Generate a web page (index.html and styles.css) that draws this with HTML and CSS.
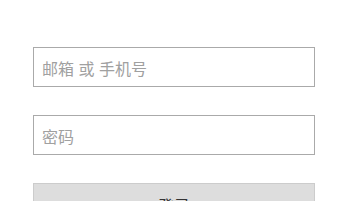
FILE: index.html
```html
<!DOCTYPE html>
<html lang="zh-CN">
<head>
  <meta charset="UTF-8">
  <meta name="viewport" content="width=device-width, initial-scale=1.0">
  <title>登录</title>
  <link rel="stylesheet" href="styles.css">
</head>
<body>
<div class="container">
  <form id="login-form" class="login-form">
    <input type="text" class="field" placeholder="邮箱 或 手机号" />
    <input type="password" class="field" placeholder="密码" />
    <button type="submit" class="button-login">登录</button>
  </form>
</div>
</body>
</html>
```

FILE: styles.css
```css
body {
  margin: 0;
  font-family: "Liberation Sans", Arial, "Noto Sans CJK SC", sans-serif;
  background-color: #fff;
}

.container {
  padding: 47px 0 0 33px;
}

.login-form {
  display: flex;
  flex-direction: column;
  gap: 28px;
  width: 282px;
}

.field {
  width: 100%;
  height: 40px;
  padding: 5px 8px 0;
  border: 1px solid #aaa;
  border-radius: 0;
  box-sizing: border-box;
  font-family: inherit;
  font-size: 16px;
  color: #333;
  outline: none;
}

.field::placeholder {
  color: #a0a0a0;
}

.button-login {
  width: 100%;
  height: 40px;
  padding-top: 5px;
  border: 1px solid #ccc;
  background-color: #ddd;
  color: #333;
  font-family: inherit;
  font-size: 16px;
  cursor: pointer;
}
```
